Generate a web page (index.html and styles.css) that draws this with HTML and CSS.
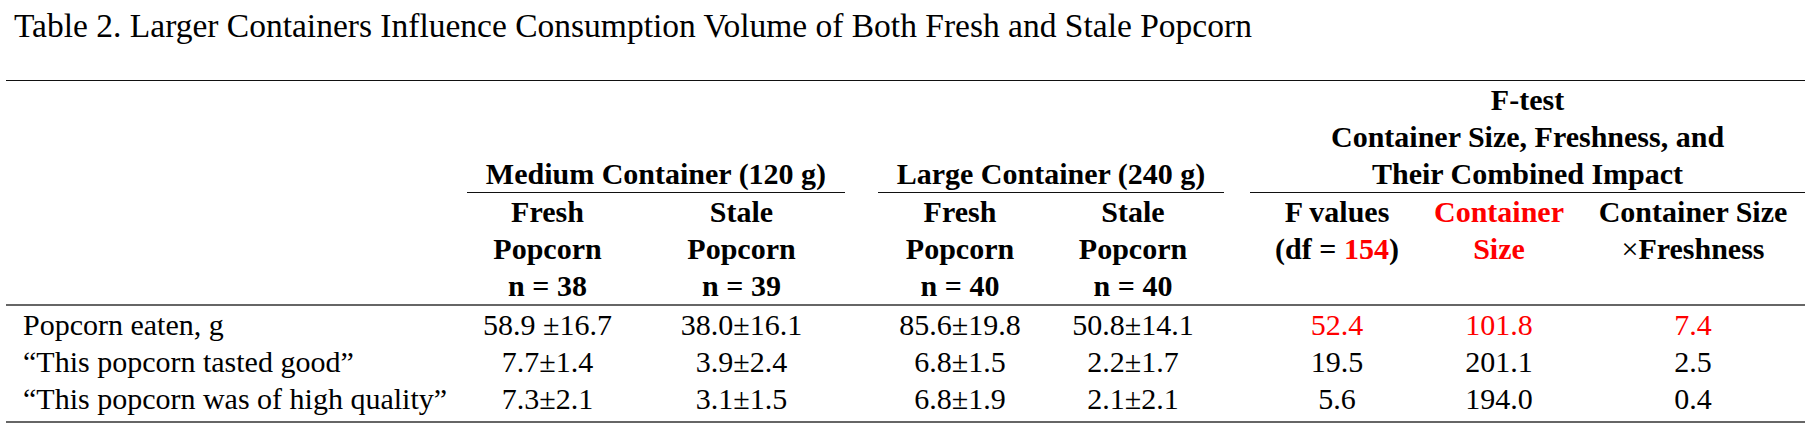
FILE: index.html
```html
<!DOCTYPE html>
<html lang="en">
<head>
<meta charset="utf-8">
<title>Table 2</title>
<link rel="stylesheet" href="styles.css">
</head>
<body>
<div class="page">
  <p class="caption">Table 2. Larger Containers Influence Consumption Volume of Both Fresh and Stale Popcorn</p>
  <table class="tbl">
    <colgroup>
      <col class="w0"><col class="w1"><col class="w2"><col class="w3"><col class="w4"><col class="w5"><col class="w6"><col class="w7">
    </colgroup>
    <thead>
      <tr class="first">
        <th></th><th colspan="2"></th><th colspan="2"></th>
        <th colspan="3"><div class="grp gf">F-test</div></th>
      </tr>
      <tr>
        <th></th><th colspan="2"></th><th colspan="2"></th>
        <th colspan="3"><div class="grp gf">Container Size, Freshness, and</div></th>
      </tr>
      <tr>
        <th></th>
        <th colspan="2"><div class="grp gm rule">Medium Container (120 g)</div></th>
        <th colspan="2"><div class="grp gl rule">Large Container (240 g)</div></th>
        <th colspan="3"><div class="grp gf rule">Their Combined Impact</div></th>
      </tr>
      <tr>
        <th></th>
        <th class="c1">Fresh</th><th class="c2">Stale</th><th class="c3">Fresh</th><th class="c4">Stale</th>
        <th class="c5">F values</th><th class="c6 red">Container</th><th class="c7">Container Size</th>
      </tr>
      <tr>
        <th></th>
        <th class="c1">Popcorn</th><th class="c2">Popcorn</th><th class="c3">Popcorn</th><th class="c4">Popcorn</th>
        <th class="c5">(df = <span class="red">154</span>)</th><th class="c6 red">Size</th><th class="c7"><span class="times">×</span>Freshness</th>
      </tr>
      <tr class="last">
        <th></th>
        <th class="c1">n = 38</th><th class="c2">n = 39</th><th class="c3">n = 40</th><th class="c4">n = 40</th>
        <th class="c5"></th><th class="c6"></th><th class="c7"></th>
      </tr>
    </thead>
    <tbody>
      <tr>
        <td class="lbl">Popcorn eaten, g</td>
        <td class="c1">58.9 ±16.7</td><td class="c2">38.0±16.1</td><td class="c3">85.6±19.8</td><td class="c4">50.8±14.1</td>
        <td class="c5 red">52.4</td><td class="c6 red">101.8</td><td class="c7 red">7.4</td>
      </tr>
      <tr>
        <td class="lbl">“This popcorn tasted good”</td>
        <td class="c1">7.7±1.4</td><td class="c2">3.9±2.4</td><td class="c3">6.8±1.5</td><td class="c4">2.2±1.7</td>
        <td class="c5">19.5</td><td class="c6">201.1</td><td class="c7">2.5</td>
      </tr>
      <tr class="end">
        <td class="lbl">“This popcorn was of high quality”</td>
        <td class="c1">7.3±2.1</td><td class="c2">3.1±1.5</td><td class="c3">6.8±1.9</td><td class="c4">2.1±2.1</td>
        <td class="c5">5.6</td><td class="c6">194.0</td><td class="c7">0.4</td>
      </tr>
    </tbody>
  </table>
</div>
</body>
</html>
```

FILE: styles.css
```css
html, body {
  margin: 0;
  padding: 0;
  background: #ffffff;
}

.page {
  padding: 7px 0 0 6px;
  font-family: "Liberation Serif", "Times New Roman", serif;
  color: #000;
}

.caption {
  margin: 0 0 36px 8px;
  font-size: 33.5px;
  line-height: 37px;
}

.tbl {
  border-collapse: collapse;
  table-layout: fixed;
  width: 1799px;
  font-size: 30px;
  line-height: 37px;
  border-top: 1px solid #111;
  border-bottom: 2px solid #666;
}

.w0 { width: 456px; }
.w1 { width: 185px; }
.w2 { width: 204px; }
.w3 { width: 196px; }
.w4 { width: 188px; }
.w5 { width: 183px; }
.w6 { width: 178px; }
.w7 { width: 209px; }

.tbl th, .tbl td {
  padding: 0;
  text-align: center;
  white-space: nowrap;
  vertical-align: baseline;
}

.tbl th { font-weight: bold; }

.tbl thead tr.last th { border-bottom: 2px solid #666; }

.tbl td.lbl {
  text-align: left;
  padding-left: 17px;
}

.c1 { padding-right: 14px !important; }
.c2 { padding-right: 15px !important; }
.c3 { padding-left: 22px !important; }
.c4 { padding-right: 16px !important; }
.c5 { padding-left: 21px !important; }
.c6 { padding-right: 16px !important; }
.c7 { padding-right: 15px !important; }

.grp { text-align: center; }
.gm { margin: 0 6px 0 5px; }
.gl { margin: 0 11px 0 27px; }
.gf { margin: 0 0 0 15px; }
.rule { border-bottom: 1px solid #111; }

.tbl tr.end td { padding-bottom: 4px; }

.red { color: #ff0000; }
.times { font-weight: normal; }
```
